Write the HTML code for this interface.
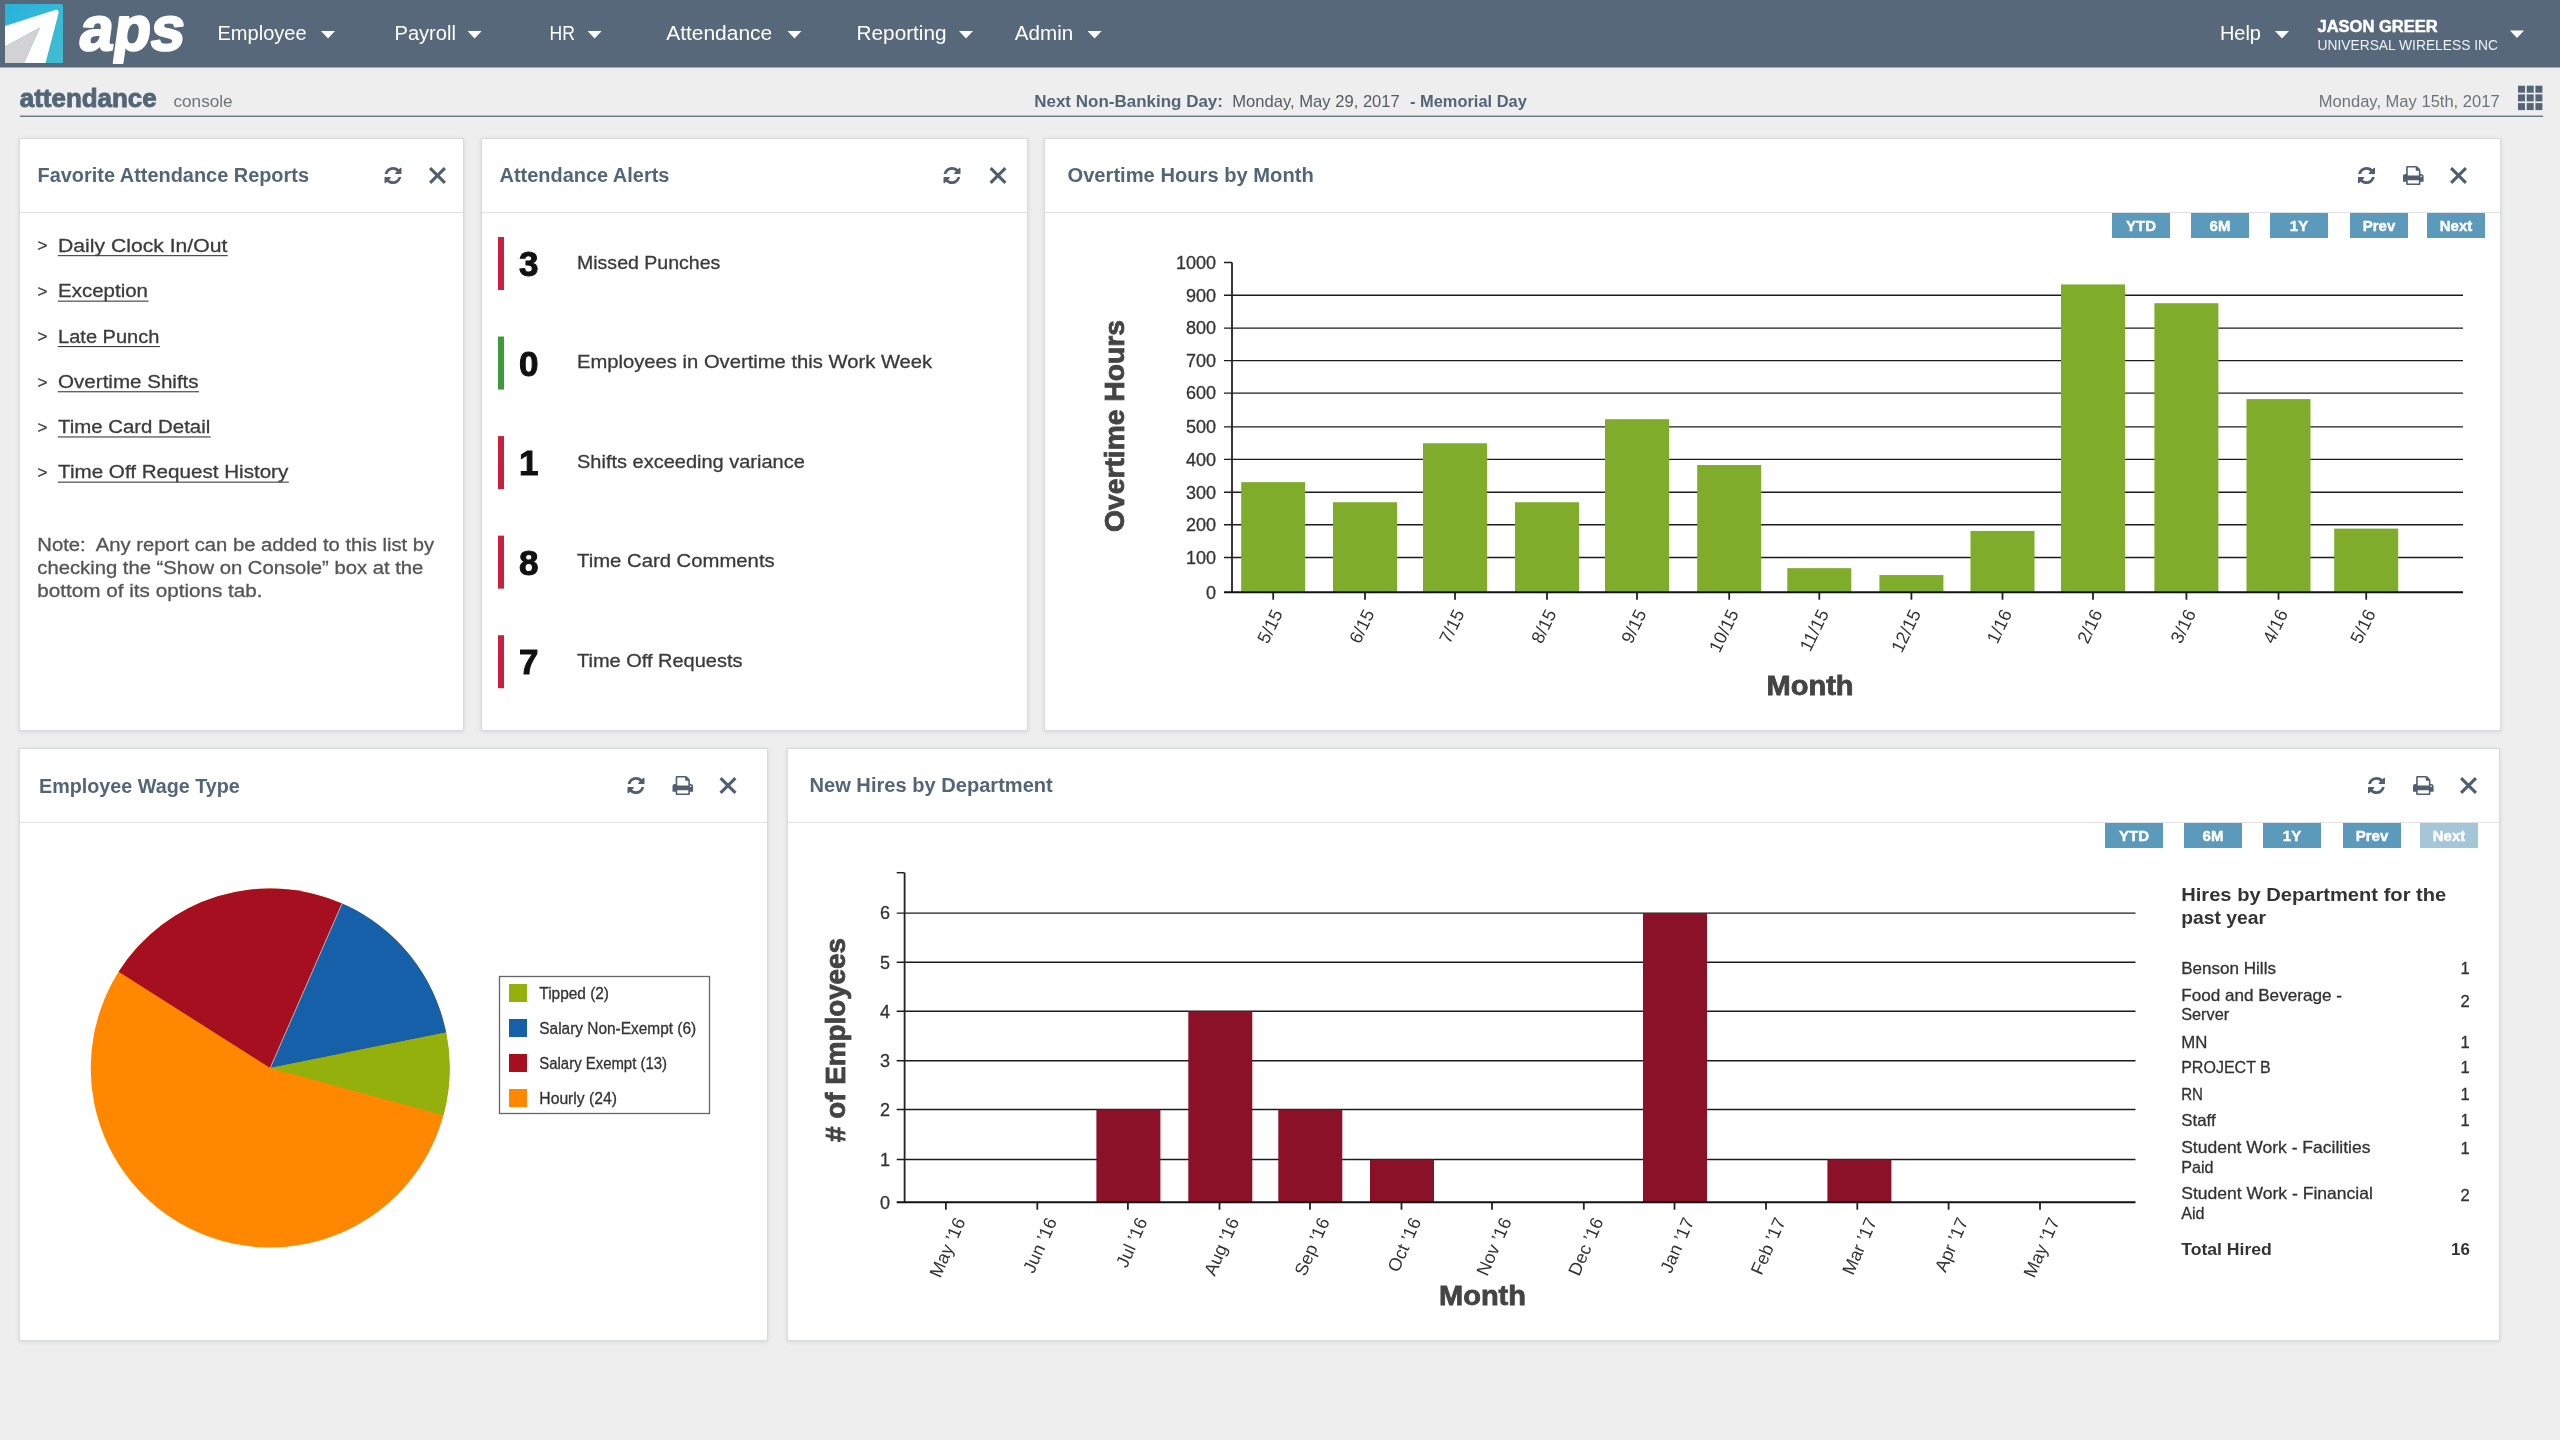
<!DOCTYPE html>
<html><head><meta charset="utf-8"><title>attendance console</title>
<style>
html,body{margin:0;padding:0;}
body{width:2560px;height:1440px;overflow:hidden;background:#eeeeee;position:relative;font-family:"Liberation Sans", sans-serif;}
.p{position:absolute;background:#fff;box-sizing:border-box;border:1px solid #d8d9dd;box-shadow:0 1px 4px rgba(0,0,0,0.10);}
.sep{position:absolute;left:0;right:0;height:1.5px;background:#dfe1e5;}
svg.o{position:absolute;left:0;top:0;will-change:transform;}
svg text{font-family:"Liberation Sans", sans-serif;}
</style></head><body>
<div class="p" style="left:19px;top:138px;width:445px;height:593px"><div class="sep" style="top:72.5px"></div></div>
<div class="p" style="left:481px;top:138px;width:547px;height:593px"><div class="sep" style="top:72.5px"></div></div>
<div class="p" style="left:1044px;top:138px;width:1457px;height:593px"><div class="sep" style="top:72.5px"></div></div>
<div class="p" style="left:19px;top:748px;width:749px;height:593px"><div class="sep" style="top:72.5px"></div></div>
<div class="p" style="left:787px;top:748px;width:1713px;height:593px"><div class="sep" style="top:72.5px"></div></div>
<svg class="o" width="2560" height="1440" viewBox="0 0 2560 1440">
<rect x="0" y="0" width="2560" height="67.5" fill="#566879"/>
<defs><linearGradient id="lg" x1="0" y1="0" x2="1" y2="1"><stop offset="0" stop-color="#27b3dc"/><stop offset="1" stop-color="#43bdd0"/></linearGradient></defs>
<g transform="translate(5,4)"><path d="M0 0 H56 Q58 0 58 2 V59 H0 Z" fill="url(#lg)"/><path d="M0 22 L50 6 Q54 5 53.5 9.5 L40.5 59 H19 L35 23.5 L0 42.5 Z" fill="#fff"/><path d="M0 42.5 L35 23.5 L19 59 H0 Z" fill="#d2d2d2"/></g>
<text x="0" y="0" font-size="62" font-weight="bold" fill="#fff" stroke="#fff" stroke-width="2.4" stroke-linejoin="round" textLength="105" lengthAdjust="spacingAndGlyphs" transform="translate(77.5,50.2) skewX(-8)">aps</text>
<text x="217.5" y="39.6" font-size="20" fill="#fff" textLength="89.1" lengthAdjust="spacingAndGlyphs">Employee</text>
<path d="M321 31 H335 L328.0 38.5 Z" fill="#fff"/>
<text x="394.5" y="39.6" font-size="20" fill="#fff" textLength="61.4" lengthAdjust="spacingAndGlyphs">Payroll</text>
<path d="M467.6 31 H481.6 L474.6 38.5 Z" fill="#fff"/>
<text x="549.6" y="39.6" font-size="20" fill="#fff" textLength="25.4" lengthAdjust="spacingAndGlyphs">HR</text>
<path d="M587.6 31 H601.6 L594.6 38.5 Z" fill="#fff"/>
<text x="666.2" y="39.6" font-size="20" fill="#fff" textLength="106.0" lengthAdjust="spacingAndGlyphs">Attendance</text>
<path d="M787.5 31 H801.5 L794.5 38.5 Z" fill="#fff"/>
<text x="856.6" y="39.6" font-size="20" fill="#fff" textLength="89.9" lengthAdjust="spacingAndGlyphs">Reporting</text>
<path d="M959 31 H973 L966.0 38.5 Z" fill="#fff"/>
<text x="1014.8" y="39.6" font-size="20" fill="#fff" textLength="58.4" lengthAdjust="spacingAndGlyphs">Admin</text>
<path d="M1087.6 31 H1101.6 L1094.6 38.5 Z" fill="#fff"/>
<text x="2219.9" y="39.6" font-size="20" fill="#fff" textLength="41.1" lengthAdjust="spacingAndGlyphs">Help</text>
<path d="M2275 31 H2289 L2282.0 38.5 Z" fill="#fff"/>
<text x="2317.5" y="31.9" font-size="16" font-weight="bold" fill="#fff" textLength="120.2" lengthAdjust="spacingAndGlyphs" stroke="#fff" stroke-width="0.5">JASON GREER</text>
<text x="2317.5" y="49.6" font-size="15" fill="#eef2f5" textLength="180.5" lengthAdjust="spacingAndGlyphs">UNIVERSAL WIRELESS INC</text>
<path d="M2510 30.6 H2524 L2517.0 38.1 Z" fill="#fff"/>
<text x="19.8" y="107.2" font-size="26" font-weight="bold" fill="#536677" textLength="136.9" lengthAdjust="spacingAndGlyphs" stroke="#536677" stroke-width="0.9">attendance</text>
<text x="173.5" y="107.2" font-size="17" fill="#6d7378" textLength="59.1" lengthAdjust="spacingAndGlyphs">console</text>
<text x="1034.2" y="107.4" font-size="17" font-weight="bold" fill="#536677" textLength="188.8" lengthAdjust="spacingAndGlyphs">Next Non-Banking Day:</text>
<text x="1232.3" y="107.4" font-size="17" fill="#555b60" textLength="167.5" lengthAdjust="spacingAndGlyphs">Monday, May 29, 2017</text>
<text x="1410" y="107.4" font-size="17" font-weight="bold" fill="#536677" textLength="116.8" lengthAdjust="spacingAndGlyphs">- Memorial Day</text>
<text x="2318.8" y="107.4" font-size="17" fill="#6d7378" textLength="180.8" lengthAdjust="spacingAndGlyphs">Monday, May 15th, 2017</text>
<rect x="20" y="115.6" width="2523" height="1.3" fill="#5d6c79"/>
<rect x="2518.0" y="85.7" width="7" height="7" fill="#536677"/>
<rect x="2526.7" y="85.7" width="7" height="7" fill="#536677"/>
<rect x="2535.4" y="85.7" width="7" height="7" fill="#536677"/>
<rect x="2518.0" y="94.4" width="7" height="7" fill="#536677"/>
<rect x="2526.7" y="94.4" width="7" height="7" fill="#536677"/>
<rect x="2535.4" y="94.4" width="7" height="7" fill="#536677"/>
<rect x="2518.0" y="103.1" width="7" height="7" fill="#536677"/>
<rect x="2526.7" y="103.1" width="7" height="7" fill="#536677"/>
<rect x="2535.4" y="103.1" width="7" height="7" fill="#536677"/>
<defs><path id="irf" d="M1639 1056q0 5-1 7-64 268-268 434.5t-478 166.5q-146 0-282.5-55t-243.5-157l-129 129q-19 19-45 19t-45-19-19-45v-448q0-26 19-45t45-19h448q26 0 45 19t19 45-19 45l-137 137q71 66 161 102t187 36q134 0 250-65t186-179q11-17 53-117 8-23 30-23h192q13 0 22.5 9.5t9.5 22.5zm25-800v448q0 26-19 45t-45 19h-448q-26 0-45-19t-19-45 19-45l138-138q-148-137-349-137-134 0-250 65t-186 179q-11 17-53 117-8 23-30 23h-199q-13 0-22.5-9.5t-9.5-22.5v-7q65-268 270-434.5t480-166.5q146 0 284 55.5t245 156.5l130-129q19-19 45-19t45 19 19 45z"/><path id="ipr" d="M448 1536h896v-256h-896v256zm0-640h896v-384h-160q-40 0-68-28t-28-68v-160h-640v640zm1152 64q0-26-19-45t-45-19-45 19-19 45 19 45 45 19 45-19 19-45zm128 0v416q0 13-9.5 22.5t-22.5 9.5h-224v160q0 40-28 68t-68 28h-960q-40 0-68-28t-28-68v-160h-224q-13 0-22.5-9.5t-9.5-22.5v-416q0-79 56.5-135.5t135.5-56.5h64v-544q0-40 28-68t68-28h672q40 0 88 20t76 48l152 152q28 28 48 76t20 88v256h64q79 0 135.5 56.5t56.5 135.5z"/></defs>
<text x="37.5" y="182.1" font-size="20" font-weight="bold" fill="#536677" textLength="271.5" lengthAdjust="spacingAndGlyphs">Favorite Attendance Reports</text>
<use href="#irf" transform="translate(384.5,167) scale(0.011068) translate(-128,-128)" fill="#4f5f6d"/>
<g transform="translate(429,167)" stroke="#4f5f6d" stroke-width="3.1" stroke-linecap="butt"><line x1="1.1" y1="1.1" x2="15.9" y2="15.9"/><line x1="15.9" y1="1.1" x2="1.1" y2="15.9"/></g>
<text x="37.5" y="251.4" font-size="17" fill="#3c3c3c" stroke="#3c3c3c" stroke-width="0.3">&gt;</text>
<text x="58.1" y="251.9" font-size="18" fill="#3c3c3c" textLength="169.2" lengthAdjust="spacingAndGlyphs" stroke="#3c3c3c" stroke-width="0.3">Daily Clock In/Out</text>
<rect x="57.8" y="255.1" width="170.0" height="1.1" fill="#3c3c3c"/>
<text x="37.5" y="296.9" font-size="17" fill="#3c3c3c" stroke="#3c3c3c" stroke-width="0.3">&gt;</text>
<text x="58.1" y="297.4" font-size="18" fill="#3c3c3c" textLength="89.9" lengthAdjust="spacingAndGlyphs" stroke="#3c3c3c" stroke-width="0.3">Exception</text>
<rect x="57.8" y="300.59999999999997" width="90.7" height="1.1" fill="#3c3c3c"/>
<text x="37.5" y="342.3" font-size="17" fill="#3c3c3c" stroke="#3c3c3c" stroke-width="0.3">&gt;</text>
<text x="58.1" y="342.8" font-size="18" fill="#3c3c3c" textLength="101.3" lengthAdjust="spacingAndGlyphs" stroke="#3c3c3c" stroke-width="0.3">Late Punch</text>
<rect x="57.8" y="346.0" width="102.10000000000001" height="1.1" fill="#3c3c3c"/>
<text x="37.5" y="387.5" font-size="17" fill="#3c3c3c" stroke="#3c3c3c" stroke-width="0.3">&gt;</text>
<text x="58.1" y="388" font-size="18" fill="#3c3c3c" textLength="140.5" lengthAdjust="spacingAndGlyphs" stroke="#3c3c3c" stroke-width="0.3">Overtime Shifts</text>
<rect x="57.8" y="391.2" width="141.3" height="1.1" fill="#3c3c3c"/>
<text x="37.5" y="432.7" font-size="17" fill="#3c3c3c" stroke="#3c3c3c" stroke-width="0.3">&gt;</text>
<text x="58.1" y="433.2" font-size="18" fill="#3c3c3c" textLength="152.1" lengthAdjust="spacingAndGlyphs" stroke="#3c3c3c" stroke-width="0.3">Time Card Detail</text>
<rect x="57.8" y="436.4" width="152.89999999999998" height="1.1" fill="#3c3c3c"/>
<text x="37.5" y="477.9" font-size="17" fill="#3c3c3c" stroke="#3c3c3c" stroke-width="0.3">&gt;</text>
<text x="58.1" y="478.4" font-size="18" fill="#3c3c3c" textLength="230.2" lengthAdjust="spacingAndGlyphs" stroke="#3c3c3c" stroke-width="0.3">Time Off Request History</text>
<rect x="57.8" y="481.59999999999997" width="231.0" height="1.1" fill="#3c3c3c"/>
<text x="37.3" y="551.1" font-size="18" fill="#555" textLength="396.9" lengthAdjust="spacingAndGlyphs" style="white-space:pre" stroke="#555" stroke-width="0.3">Note:  Any report can be added to this list by</text>
<text x="37.3" y="574.3" font-size="18" fill="#555" textLength="386.1" lengthAdjust="spacingAndGlyphs" style="white-space:pre" stroke="#555" stroke-width="0.3">checking the “Show on Console” box at the</text>
<text x="37.3" y="597.4" font-size="18" fill="#555" textLength="225.3" lengthAdjust="spacingAndGlyphs" style="white-space:pre" stroke="#555" stroke-width="0.3">bottom of its options tab.</text>
<text x="499.5" y="182.1" font-size="20" font-weight="bold" fill="#536677" textLength="169.9" lengthAdjust="spacingAndGlyphs">Attendance Alerts</text>
<use href="#irf" transform="translate(943.5,167) scale(0.011068) translate(-128,-128)" fill="#4f5f6d"/>
<g transform="translate(989.5,167)" stroke="#4f5f6d" stroke-width="3.1" stroke-linecap="butt"><line x1="1.1" y1="1.1" x2="15.9" y2="15.9"/><line x1="15.9" y1="1.1" x2="1.1" y2="15.9"/></g>
<rect x="498" y="237.0" width="6" height="53" fill="#c8203f"/>
<text x="519" y="276.2" font-size="35" font-weight="bold" fill="#111" stroke="#111" stroke-width="1.0">3</text>
<text x="577" y="268.6" font-size="18.5" fill="#3a3a3a" textLength="143.3" lengthAdjust="spacingAndGlyphs" stroke="#3a3a3a" stroke-width="0.3">Missed Punches</text>
<rect x="498" y="336.55" width="6" height="53" fill="#3f9a3a"/>
<text x="519" y="375.75" font-size="35" font-weight="bold" fill="#111" stroke="#111" stroke-width="1.0">0</text>
<text x="577" y="368.15000000000003" font-size="18.5" fill="#3a3a3a" textLength="355.2" lengthAdjust="spacingAndGlyphs" stroke="#3a3a3a" stroke-width="0.3">Employees in Overtime this Work Week</text>
<rect x="498" y="436.1" width="6" height="53" fill="#c8203f"/>
<text x="519" y="475.3" font-size="35" font-weight="bold" fill="#111" stroke="#111" stroke-width="1.0">1</text>
<text x="577" y="467.70000000000005" font-size="18.5" fill="#3a3a3a" textLength="227.8" lengthAdjust="spacingAndGlyphs" stroke="#3a3a3a" stroke-width="0.3">Shifts exceeding variance</text>
<rect x="498" y="535.65" width="6" height="53" fill="#c8203f"/>
<text x="519" y="574.85" font-size="35" font-weight="bold" fill="#111" stroke="#111" stroke-width="1.0">8</text>
<text x="577" y="567.25" font-size="18.5" fill="#3a3a3a" textLength="197.7" lengthAdjust="spacingAndGlyphs" stroke="#3a3a3a" stroke-width="0.3">Time Card Comments</text>
<rect x="498" y="635.2" width="6" height="53" fill="#c8203f"/>
<text x="519" y="674.4000000000001" font-size="35" font-weight="bold" fill="#111" stroke="#111" stroke-width="1.0">7</text>
<text x="577" y="666.8000000000001" font-size="18.5" fill="#3a3a3a" textLength="165.5" lengthAdjust="spacingAndGlyphs" stroke="#3a3a3a" stroke-width="0.3">Time Off Requests</text>
<text x="1067.5" y="182.1" font-size="20" font-weight="bold" fill="#536677" textLength="246.2" lengthAdjust="spacingAndGlyphs">Overtime Hours by Month</text>
<use href="#irf" transform="translate(2358,167) scale(0.011068) translate(-128,-128)" fill="#4f5f6d"/>
<use href="#ipr" transform="translate(2403,166) scale(0.012380) translate(-64,-128)" fill="#4f5f6d"/>
<g transform="translate(2450,167)" stroke="#4f5f6d" stroke-width="3.1" stroke-linecap="butt"><line x1="1.1" y1="1.1" x2="15.9" y2="15.9"/><line x1="15.9" y1="1.1" x2="1.1" y2="15.9"/></g>
<rect x="2112" y="213" width="58" height="25" fill="#5b9aba"/>
<text x="2141" y="231" font-size="15" font-weight="bold" fill="#fff" text-anchor="middle" stroke="#fff" stroke-width="0.4">YTD</text>
<rect x="2191" y="213" width="58" height="25" fill="#5b9aba"/>
<text x="2220" y="231" font-size="15" font-weight="bold" fill="#fff" text-anchor="middle" stroke="#fff" stroke-width="0.4">6M</text>
<rect x="2270" y="213" width="58" height="25" fill="#5b9aba"/>
<text x="2299" y="231" font-size="15" font-weight="bold" fill="#fff" text-anchor="middle" stroke="#fff" stroke-width="0.4">1Y</text>
<rect x="2350" y="213" width="58" height="25" fill="#5b9aba"/>
<text x="2379" y="231" font-size="15" font-weight="bold" fill="#fff" text-anchor="middle" stroke="#fff" stroke-width="0.4">Prev</text>
<rect x="2427" y="213" width="58" height="25" fill="#5b9aba"/>
<text x="2456" y="231" font-size="15" font-weight="bold" fill="#fff" text-anchor="middle" stroke="#fff" stroke-width="0.4">Next</text>
<line x1="1224" y1="262.5" x2="1232" y2="262.5" stroke="#1c1c1c" stroke-width="1.5"/>
<text x="1216" y="268.8" font-size="18" fill="#333" text-anchor="end" stroke="#333" stroke-width="0.3">1000</text>
<line x1="1224" y1="295.25" x2="2463" y2="295.25" stroke="#1c1c1c" stroke-width="1.4"/>
<text x="1216" y="301.55" font-size="18" fill="#333" text-anchor="end" stroke="#333" stroke-width="0.3">900</text>
<line x1="1224" y1="328.1" x2="2463" y2="328.1" stroke="#1c1c1c" stroke-width="1.4"/>
<text x="1216" y="334.40000000000003" font-size="18" fill="#333" text-anchor="end" stroke="#333" stroke-width="0.3">800</text>
<line x1="1224" y1="360.6" x2="2463" y2="360.6" stroke="#1c1c1c" stroke-width="1.4"/>
<text x="1216" y="366.90000000000003" font-size="18" fill="#333" text-anchor="end" stroke="#333" stroke-width="0.3">700</text>
<line x1="1224" y1="393.1" x2="2463" y2="393.1" stroke="#1c1c1c" stroke-width="1.4"/>
<text x="1216" y="399.40000000000003" font-size="18" fill="#333" text-anchor="end" stroke="#333" stroke-width="0.3">600</text>
<line x1="1224" y1="426.9" x2="2463" y2="426.9" stroke="#1c1c1c" stroke-width="1.4"/>
<text x="1216" y="433.2" font-size="18" fill="#333" text-anchor="end" stroke="#333" stroke-width="0.3">500</text>
<line x1="1224" y1="459.4" x2="2463" y2="459.4" stroke="#1c1c1c" stroke-width="1.4"/>
<text x="1216" y="465.7" font-size="18" fill="#333" text-anchor="end" stroke="#333" stroke-width="0.3">400</text>
<line x1="1224" y1="492.25" x2="2463" y2="492.25" stroke="#1c1c1c" stroke-width="1.4"/>
<text x="1216" y="498.55" font-size="18" fill="#333" text-anchor="end" stroke="#333" stroke-width="0.3">300</text>
<line x1="1224" y1="524.75" x2="2463" y2="524.75" stroke="#1c1c1c" stroke-width="1.4"/>
<text x="1216" y="531.05" font-size="18" fill="#333" text-anchor="end" stroke="#333" stroke-width="0.3">200</text>
<line x1="1224" y1="557.5" x2="2463" y2="557.5" stroke="#1c1c1c" stroke-width="1.4"/>
<text x="1216" y="563.8" font-size="18" fill="#333" text-anchor="end" stroke="#333" stroke-width="0.3">100</text>
<text x="1216" y="598.5" font-size="18" fill="#333" text-anchor="end" stroke="#333" stroke-width="0.3">0</text>
<rect x="1241.2" y="482.14700000000005" width="64" height="110.05300000000001" fill="#7fac2a"/>
<line x1="1273.2" y1="592.2" x2="1273.2" y2="599.7" stroke="#222" stroke-width="1.8"/>
<text transform="translate(1283.2,613.2) rotate(-64)" font-size="18" fill="#333" text-anchor="end">5/15</text>
<rect x="1333" y="502.2465" width="64" height="89.9535" fill="#7fac2a"/>
<line x1="1365" y1="592.2" x2="1365" y2="599.7" stroke="#222" stroke-width="1.8"/>
<text transform="translate(1375,613.2) rotate(-64)" font-size="18" fill="#333" text-anchor="end">6/15</text>
<rect x="1423" y="443.266" width="64" height="148.93400000000003" fill="#7fac2a"/>
<line x1="1455" y1="592.2" x2="1455" y2="599.7" stroke="#222" stroke-width="1.8"/>
<text transform="translate(1465,613.2) rotate(-64)" font-size="18" fill="#333" text-anchor="end">7/15</text>
<rect x="1515" y="502.2465" width="64" height="89.9535" fill="#7fac2a"/>
<line x1="1547" y1="592.2" x2="1547" y2="599.7" stroke="#222" stroke-width="1.8"/>
<text transform="translate(1557,613.2) rotate(-64)" font-size="18" fill="#333" text-anchor="end">8/15</text>
<rect x="1605" y="419.21250000000003" width="64" height="172.9875" fill="#7fac2a"/>
<line x1="1637" y1="592.2" x2="1637" y2="599.7" stroke="#222" stroke-width="1.8"/>
<text transform="translate(1647,613.2) rotate(-64)" font-size="18" fill="#333" text-anchor="end">9/15</text>
<rect x="1697.2" y="465.01300000000003" width="64" height="127.18700000000001" fill="#7fac2a"/>
<line x1="1729.2" y1="592.2" x2="1729.2" y2="599.7" stroke="#222" stroke-width="1.8"/>
<text transform="translate(1739.2,613.2) rotate(-64)" font-size="18" fill="#333" text-anchor="end">10/15</text>
<rect x="1787.3" y="568.1465000000001" width="64" height="24.053500000000003" fill="#7fac2a"/>
<line x1="1819.3" y1="592.2" x2="1819.3" y2="599.7" stroke="#222" stroke-width="1.8"/>
<text transform="translate(1829.3,613.2) rotate(-64)" font-size="18" fill="#333" text-anchor="end">11/15</text>
<rect x="1879.4" y="575.066" width="64" height="17.134" fill="#7fac2a"/>
<line x1="1911.4" y1="592.2" x2="1911.4" y2="599.7" stroke="#222" stroke-width="1.8"/>
<text transform="translate(1921.4,613.2) rotate(-64)" font-size="18" fill="#333" text-anchor="end">12/15</text>
<rect x="1970.5" y="530.913" width="64" height="61.287000000000006" fill="#7fac2a"/>
<line x1="2002.5" y1="592.2" x2="2002.5" y2="599.7" stroke="#222" stroke-width="1.8"/>
<text transform="translate(2012.5,613.2) rotate(-64)" font-size="18" fill="#333" text-anchor="end">1/16</text>
<rect x="2061" y="284.447" width="64" height="307.75300000000004" fill="#7fac2a"/>
<line x1="2093" y1="592.2" x2="2093" y2="599.7" stroke="#222" stroke-width="1.8"/>
<text transform="translate(2103,613.2) rotate(-64)" font-size="18" fill="#333" text-anchor="end">2/16</text>
<rect x="2154.4" y="303.22850000000005" width="64" height="288.9715" fill="#7fac2a"/>
<line x1="2186.4" y1="592.2" x2="2186.4" y2="599.7" stroke="#222" stroke-width="1.8"/>
<text transform="translate(2196.4,613.2) rotate(-64)" font-size="18" fill="#333" text-anchor="end">3/16</text>
<rect x="2246.5" y="399.11300000000006" width="64" height="193.08700000000002" fill="#7fac2a"/>
<line x1="2278.5" y1="592.2" x2="2278.5" y2="599.7" stroke="#222" stroke-width="1.8"/>
<text transform="translate(2288.5,613.2) rotate(-64)" font-size="18" fill="#333" text-anchor="end">4/16</text>
<rect x="2334.2" y="528.6065000000001" width="64" height="63.593500000000006" fill="#7fac2a"/>
<line x1="2366.2" y1="592.2" x2="2366.2" y2="599.7" stroke="#222" stroke-width="1.8"/>
<text transform="translate(2376.2,613.2) rotate(-64)" font-size="18" fill="#333" text-anchor="end">5/16</text>
<line x1="1232" y1="262.5" x2="1232" y2="592.2" stroke="#222" stroke-width="1.8"/>
<line x1="1224" y1="592.2" x2="2463" y2="592.2" stroke="#111" stroke-width="2"/>
<text transform="translate(1124,426) rotate(-90)" font-size="28" font-weight="bold" fill="#444" stroke="#444" stroke-width="0.8" text-anchor="middle" textLength="212" lengthAdjust="spacingAndGlyphs">Overtime Hours</text>
<text x="1766.6" y="695" font-size="27" font-weight="bold" fill="#444" textLength="87.0" lengthAdjust="spacingAndGlyphs" stroke="#444" stroke-width="0.8">Month</text>
<text x="39" y="793.3" font-size="20" font-weight="bold" fill="#536677" textLength="200.8" lengthAdjust="spacingAndGlyphs">Employee Wage Type</text>
<use href="#irf" transform="translate(627.5,777) scale(0.011068) translate(-128,-128)" fill="#4f5f6d"/>
<use href="#ipr" transform="translate(672.5,776) scale(0.012380) translate(-64,-128)" fill="#4f5f6d"/>
<g transform="translate(719.5,777)" stroke="#4f5f6d" stroke-width="3.1" stroke-linecap="butt"><line x1="1.1" y1="1.1" x2="15.9" y2="15.9"/><line x1="15.9" y1="1.1" x2="1.1" y2="15.9"/></g>
<circle cx="270.2" cy="1068" r="179.5" fill="#ff8800"/>
<path d="M270.2 1068 L342.06 903.51 A179.5 179.5 0 0 0 118.64 971.82 Z" fill="#a50f20"/>
<path d="M270.2 1068 L446.16 1032.52 A179.5 179.5 0 0 0 342.06 903.51 Z" fill="#1560a8"/>
<path d="M270.2 1068 L443.34 1115.37 A179.5 179.5 0 0 0 446.16 1032.52 Z" fill="#93b00c"/>
<line x1="270.2" y1="1068" x2="342.06" y2="903.51" stroke="#d9d9e0" stroke-width="0.7"/>
<rect x="499.5" y="976.5" width="210" height="137" fill="none" stroke="#666" stroke-width="1.3"/>
<rect x="509" y="984" width="18" height="18" fill="#93b00c"/>
<text x="539.3" y="999" font-size="16" fill="#333" textLength="69.7" lengthAdjust="spacingAndGlyphs" stroke="#333" stroke-width="0.3">Tipped (2)</text>
<rect x="509" y="1019" width="18" height="18" fill="#1560a8"/>
<text x="539.3" y="1034" font-size="16" fill="#333" textLength="156.9" lengthAdjust="spacingAndGlyphs" stroke="#333" stroke-width="0.3">Salary Non-Exempt (6)</text>
<rect x="509" y="1054" width="18" height="18" fill="#a50f20"/>
<text x="539.3" y="1069" font-size="16" fill="#333" textLength="127.7" lengthAdjust="spacingAndGlyphs" stroke="#333" stroke-width="0.3">Salary Exempt (13)</text>
<rect x="509" y="1089" width="18" height="18" fill="#ff8800"/>
<text x="539.3" y="1104" font-size="16" fill="#333" textLength="77.7" lengthAdjust="spacingAndGlyphs" stroke="#333" stroke-width="0.3">Hourly (24)</text>
<text x="809.5" y="792" font-size="20" font-weight="bold" fill="#536677" textLength="243.3" lengthAdjust="spacingAndGlyphs">New Hires by Department</text>
<use href="#irf" transform="translate(2368,777) scale(0.011068) translate(-128,-128)" fill="#4f5f6d"/>
<use href="#ipr" transform="translate(2413,776) scale(0.012380) translate(-64,-128)" fill="#4f5f6d"/>
<g transform="translate(2460,777)" stroke="#4f5f6d" stroke-width="3.1" stroke-linecap="butt"><line x1="1.1" y1="1.1" x2="15.9" y2="15.9"/><line x1="15.9" y1="1.1" x2="1.1" y2="15.9"/></g>
<rect x="2105" y="823" width="58" height="25" fill="#5b9aba"/>
<text x="2134" y="841" font-size="15" font-weight="bold" fill="#fff" text-anchor="middle" stroke="#fff" stroke-width="0.4">YTD</text>
<rect x="2184" y="823" width="58" height="25" fill="#5b9aba"/>
<text x="2213" y="841" font-size="15" font-weight="bold" fill="#fff" text-anchor="middle" stroke="#fff" stroke-width="0.4">6M</text>
<rect x="2263" y="823" width="58" height="25" fill="#5b9aba"/>
<text x="2292" y="841" font-size="15" font-weight="bold" fill="#fff" text-anchor="middle" stroke="#fff" stroke-width="0.4">1Y</text>
<rect x="2343" y="823" width="58" height="25" fill="#5b9aba"/>
<text x="2372" y="841" font-size="15" font-weight="bold" fill="#fff" text-anchor="middle" stroke="#fff" stroke-width="0.4">Prev</text>
<rect x="2420" y="823" width="58" height="25" fill="#a5c6d8"/>
<text x="2449" y="841" font-size="15" font-weight="bold" fill="#fff" text-anchor="middle" stroke="#fff" stroke-width="0.4">Next</text>
<line x1="896.7" y1="872.7" x2="904.6" y2="872.7" stroke="#222" stroke-width="1.5"/>
<line x1="896.7" y1="913.1" x2="2135.5" y2="913.1" stroke="#1c1c1c" stroke-width="1.4"/>
<text x="890" y="919.4" font-size="18" fill="#333" text-anchor="end" stroke="#333" stroke-width="0.3">6</text>
<line x1="896.7" y1="962.2" x2="2135.5" y2="962.2" stroke="#1c1c1c" stroke-width="1.4"/>
<text x="890" y="968.5" font-size="18" fill="#333" text-anchor="end" stroke="#333" stroke-width="0.3">5</text>
<line x1="896.7" y1="1011.3" x2="2135.5" y2="1011.3" stroke="#1c1c1c" stroke-width="1.4"/>
<text x="890" y="1017.5999999999999" font-size="18" fill="#333" text-anchor="end" stroke="#333" stroke-width="0.3">4</text>
<line x1="896.7" y1="1060.8" x2="2135.5" y2="1060.8" stroke="#1c1c1c" stroke-width="1.4"/>
<text x="890" y="1067.1" font-size="18" fill="#333" text-anchor="end" stroke="#333" stroke-width="0.3">3</text>
<line x1="896.7" y1="1109.5" x2="2135.5" y2="1109.5" stroke="#1c1c1c" stroke-width="1.4"/>
<text x="890" y="1115.8" font-size="18" fill="#333" text-anchor="end" stroke="#333" stroke-width="0.3">2</text>
<line x1="896.7" y1="1159.5" x2="2135.5" y2="1159.5" stroke="#1c1c1c" stroke-width="1.4"/>
<text x="890" y="1165.8" font-size="18" fill="#333" text-anchor="end" stroke="#333" stroke-width="0.3">1</text>
<text x="890" y="1208.5" font-size="18" fill="#333" text-anchor="end" stroke="#333" stroke-width="0.3">0</text>
<rect x="1096.4" y="1109.5" width="64" height="92.70000000000005" fill="#8a1127"/>
<rect x="1188.3" y="1011.3" width="64" height="190.9000000000001" fill="#8a1127"/>
<rect x="1278.3" y="1109.5" width="64" height="92.70000000000005" fill="#8a1127"/>
<rect x="1370" y="1159.5" width="64" height="42.700000000000045" fill="#8a1127"/>
<rect x="1643" y="913.1" width="64" height="289.1" fill="#8a1127"/>
<rect x="1827.4" y="1159.5" width="64" height="42.700000000000045" fill="#8a1127"/>
<line x1="945.9" y1="1202.2" x2="945.9" y2="1209.7" stroke="#222" stroke-width="1.8"/>
<text transform="translate(965.9,1221.2) rotate(-66)" font-size="18" fill="#333" text-anchor="end">May &#8217;16</text>
<line x1="1037.3" y1="1202.2" x2="1037.3" y2="1209.7" stroke="#222" stroke-width="1.8"/>
<text transform="translate(1057.3,1221.2) rotate(-66)" font-size="18" fill="#333" text-anchor="end">Jun &#8217;16</text>
<line x1="1127.9" y1="1202.2" x2="1127.9" y2="1209.7" stroke="#222" stroke-width="1.8"/>
<text transform="translate(1147.9,1221.2) rotate(-66)" font-size="18" fill="#333" text-anchor="end">Jul &#8217;16</text>
<line x1="1219.5" y1="1202.2" x2="1219.5" y2="1209.7" stroke="#222" stroke-width="1.8"/>
<text transform="translate(1239.5,1221.2) rotate(-66)" font-size="18" fill="#333" text-anchor="end">Aug &#8217;16</text>
<line x1="1310" y1="1202.2" x2="1310" y2="1209.7" stroke="#222" stroke-width="1.8"/>
<text transform="translate(1330,1221.2) rotate(-66)" font-size="18" fill="#333" text-anchor="end">Sep &#8217;16</text>
<line x1="1401.5" y1="1202.2" x2="1401.5" y2="1209.7" stroke="#222" stroke-width="1.8"/>
<text transform="translate(1421.5,1221.2) rotate(-66)" font-size="18" fill="#333" text-anchor="end">Oct &#8217;16</text>
<line x1="1492" y1="1202.2" x2="1492" y2="1209.7" stroke="#222" stroke-width="1.8"/>
<text transform="translate(1512,1221.2) rotate(-66)" font-size="18" fill="#333" text-anchor="end">Nov &#8217;16</text>
<line x1="1583.8" y1="1202.2" x2="1583.8" y2="1209.7" stroke="#222" stroke-width="1.8"/>
<text transform="translate(1603.8,1221.2) rotate(-66)" font-size="18" fill="#333" text-anchor="end">Dec &#8217;16</text>
<line x1="1674.5" y1="1202.2" x2="1674.5" y2="1209.7" stroke="#222" stroke-width="1.8"/>
<text transform="translate(1694.5,1221.2) rotate(-66)" font-size="18" fill="#333" text-anchor="end">Jan &#8217;17</text>
<line x1="1766" y1="1202.2" x2="1766" y2="1209.7" stroke="#222" stroke-width="1.8"/>
<text transform="translate(1786,1221.2) rotate(-66)" font-size="18" fill="#333" text-anchor="end">Feb &#8217;17</text>
<line x1="1857.3" y1="1202.2" x2="1857.3" y2="1209.7" stroke="#222" stroke-width="1.8"/>
<text transform="translate(1877.3,1221.2) rotate(-66)" font-size="18" fill="#333" text-anchor="end">Mar &#8217;17</text>
<line x1="1948.6" y1="1202.2" x2="1948.6" y2="1209.7" stroke="#222" stroke-width="1.8"/>
<text transform="translate(1968.6,1221.2) rotate(-66)" font-size="18" fill="#333" text-anchor="end">Apr &#8217;17</text>
<line x1="2040" y1="1202.2" x2="2040" y2="1209.7" stroke="#222" stroke-width="1.8"/>
<text transform="translate(2060,1221.2) rotate(-66)" font-size="18" fill="#333" text-anchor="end">May &#8217;17</text>
<line x1="904.6" y1="872.7" x2="904.6" y2="1202.2" stroke="#222" stroke-width="1.8"/>
<line x1="896.7" y1="1202.2" x2="2135.5" y2="1202.2" stroke="#111" stroke-width="2"/>
<text transform="translate(845,1040) rotate(-90)" font-size="28" font-weight="bold" fill="#444" stroke="#444" stroke-width="0.8" text-anchor="middle" textLength="204" lengthAdjust="spacingAndGlyphs"># of Employees</text>
<text x="1439" y="1305" font-size="27" font-weight="bold" fill="#444" textLength="87.0" lengthAdjust="spacingAndGlyphs" stroke="#444" stroke-width="0.8">Month</text>
<text x="2181.2" y="900.7" font-size="18" font-weight="bold" fill="#333" textLength="265.1" lengthAdjust="spacingAndGlyphs">Hires by Department for the</text>
<text x="2181.2" y="924.2" font-size="18" font-weight="bold" fill="#333" textLength="84.8" lengthAdjust="spacingAndGlyphs">past year</text>
<text x="2181.2" y="973.8" font-size="16.5" fill="#333" textLength="94.8" lengthAdjust="spacingAndGlyphs" stroke="#333" stroke-width="0.3">Benson Hills</text>
<text x="2469.8" y="973.8" font-size="16.5" fill="#333" text-anchor="end" stroke="#333" stroke-width="0.3">1</text>
<text x="2181.2" y="1000.5" font-size="16.5" fill="#333" textLength="160.7" lengthAdjust="spacingAndGlyphs" stroke="#333" stroke-width="0.3">Food and Beverage -</text>
<text x="2181.2" y="1020.2" font-size="16.5" fill="#333" textLength="48.0" lengthAdjust="spacingAndGlyphs" stroke="#333" stroke-width="0.3">Server</text>
<text x="2469.8" y="1007" font-size="16.5" fill="#333" text-anchor="end" stroke="#333" stroke-width="0.3">2</text>
<text x="2181.2" y="1047.5" font-size="16.5" fill="#333" textLength="26.1" lengthAdjust="spacingAndGlyphs" stroke="#333" stroke-width="0.3">MN</text>
<text x="2469.8" y="1047.5" font-size="16.5" fill="#333" text-anchor="end" stroke="#333" stroke-width="0.3">1</text>
<text x="2181.2" y="1073.3" font-size="16.5" fill="#333" textLength="89.6" lengthAdjust="spacingAndGlyphs" stroke="#333" stroke-width="0.3">PROJECT B</text>
<text x="2469.8" y="1073.3" font-size="16.5" fill="#333" text-anchor="end" stroke="#333" stroke-width="0.3">1</text>
<text x="2181.2" y="1100.4" font-size="16.5" fill="#333" textLength="21.8" lengthAdjust="spacingAndGlyphs" stroke="#333" stroke-width="0.3">RN</text>
<text x="2469.8" y="1100.4" font-size="16.5" fill="#333" text-anchor="end" stroke="#333" stroke-width="0.3">1</text>
<text x="2181.2" y="1126" font-size="16.5" fill="#333" textLength="34.4" lengthAdjust="spacingAndGlyphs" stroke="#333" stroke-width="0.3">Staff</text>
<text x="2469.8" y="1126" font-size="16.5" fill="#333" text-anchor="end" stroke="#333" stroke-width="0.3">1</text>
<text x="2181.2" y="1153" font-size="16.5" fill="#333" textLength="189.2" lengthAdjust="spacingAndGlyphs" stroke="#333" stroke-width="0.3">Student Work - Facilities</text>
<text x="2181.2" y="1172.7" font-size="16.5" fill="#333" textLength="32.3" lengthAdjust="spacingAndGlyphs" stroke="#333" stroke-width="0.3">Paid</text>
<text x="2469.8" y="1154" font-size="16.5" fill="#333" text-anchor="end" stroke="#333" stroke-width="0.3">1</text>
<text x="2181.2" y="1199" font-size="16.5" fill="#333" textLength="191.7" lengthAdjust="spacingAndGlyphs" stroke="#333" stroke-width="0.3">Student Work - Financial</text>
<text x="2181.2" y="1218.7" font-size="16.5" fill="#333" textLength="23.4" lengthAdjust="spacingAndGlyphs" stroke="#333" stroke-width="0.3">Aid</text>
<text x="2469.8" y="1201" font-size="16.5" fill="#333" text-anchor="end" stroke="#333" stroke-width="0.3">2</text>
<text x="2181.2" y="1255.2" font-size="17" font-weight="bold" fill="#333" textLength="90.7" lengthAdjust="spacingAndGlyphs">Total Hired</text>
<text x="2451" y="1255.2" font-size="17" font-weight="bold" fill="#333" textLength="18.8" lengthAdjust="spacingAndGlyphs">16</text>
</svg>
</body></html>
